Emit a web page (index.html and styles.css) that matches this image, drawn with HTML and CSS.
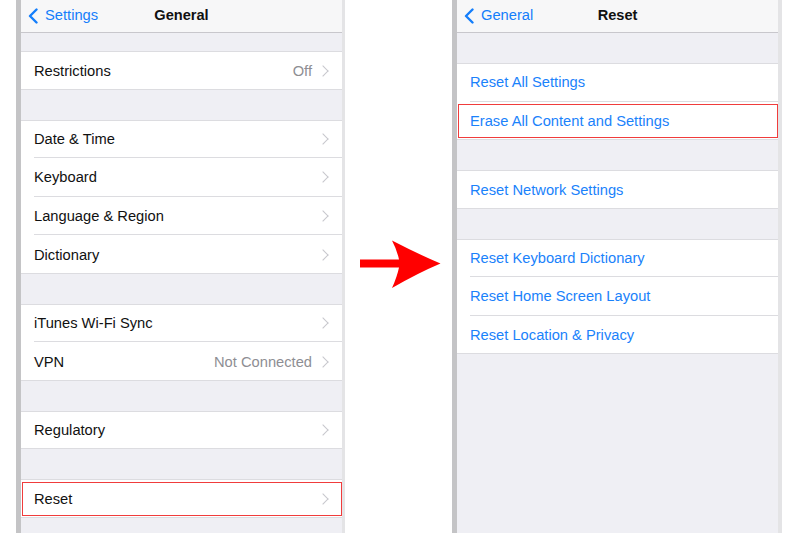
FILE: index.html
```html
<!DOCTYPE html>
<html>
<head>
<meta charset="utf-8">
<link rel="stylesheet" href="styles.css">
</head>
<body>
<div class="page">
  <div class="lead"></div>
  <div class="phone">
    <div class="screen">
      <div class="nav">
        <div class="back">
          <svg class="back-icon" width="12" height="16" viewBox="0 0 12 16"><path d="M9.5 1.5 L3 8 L9.5 14.5" fill="none" stroke="#147efb" stroke-width="2.4" stroke-linecap="round" stroke-linejoin="round"/></svg>
          <span>Settings</span>
        </div>
        <div class="title">General</div>
      </div>
      <div class="group first">
        <div class="row"><div class="inner"><span class="label">Restrictions</span><span class="value">Off</span><span class="chev"></span></div></div>
      </div>
      <div class="group">
        <div class="row"><div class="inner"><span class="label">Date &amp; Time</span><span class="chev"></span></div></div>
        <div class="row"><div class="inner"><span class="label">Keyboard</span><span class="chev"></span></div></div>
        <div class="row"><div class="inner"><span class="label">Language &amp; Region</span><span class="chev"></span></div></div>
        <div class="row"><div class="inner"><span class="label">Dictionary</span><span class="chev"></span></div></div>
      </div>
      <div class="group">
        <div class="row"><div class="inner"><span class="label">iTunes Wi-Fi Sync</span><span class="chev"></span></div></div>
        <div class="row"><div class="inner"><span class="label">VPN</span><span class="value">Not Connected</span><span class="chev"></span></div></div>
      </div>
      <div class="group">
        <div class="row"><div class="inner"><span class="label">Regulatory</span><span class="chev"></span></div></div>
      </div>
      <div class="group">
        <div class="row hl"><div class="inner"><span class="label">Reset</span><span class="chev"></span></div><div class="mark"></div></div>
      </div>
    </div>
  </div>
  <div class="middle">
    <svg class="arrow" width="107" height="533" viewBox="345 0 107 533">
      <path d="M360 259.5 L399 259.5 Q397 250 392 240.5 Q418 254 440.5 263.5 Q418 273 392 288 Q397 277 399 267.5 L360 267.5 Z" fill="#ff0000"/>
    </svg>
  </div>
  <div class="phone right">
    <div class="screen">
      <div class="nav">
        <div class="back">
          <svg class="back-icon" width="12" height="16" viewBox="0 0 12 16"><path d="M9.5 1.5 L3 8 L9.5 14.5" fill="none" stroke="#147efb" stroke-width="2.4" stroke-linecap="round" stroke-linejoin="round"/></svg>
          <span>General</span>
        </div>
        <div class="title">Reset</div>
      </div>
      <div class="group">
        <div class="row"><div class="inner"><span class="label blue">Reset All Settings</span></div></div>
        <div class="row hl"><div class="inner"><span class="label blue">Erase All Content and Settings</span></div><div class="mark"></div></div>
      </div>
      <div class="group">
        <div class="row"><div class="inner"><span class="label blue">Reset Network Settings</span></div></div>
      </div>
      <div class="group">
        <div class="row"><div class="inner"><span class="label blue">Reset Keyboard Dictionary</span></div></div>
        <div class="row"><div class="inner"><span class="label blue">Reset Home Screen Layout</span></div></div>
        <div class="row"><div class="inner"><span class="label blue">Reset Location &amp; Privacy</span></div></div>
      </div>
    </div>
  </div>
</div>
</body>
</html>
```
FILE: styles.css
```css
* { box-sizing: border-box; }
html, body { margin: 0; padding: 0; background: #ffffff; }
body {
  width: 800px;
  height: 533px;
  overflow: hidden;
  font-family: "Liberation Sans", Arial, sans-serif;
}
.page {
  display: flex;
  height: 533px;
}
.lead { width: 16px; flex: none; }
.phone {
  width: 329px;
  flex: none;
  height: 533px;
  display: flex;
  border-left: 5px solid #c4c4c6;
  border-right: 3px solid #e4e4e6;
  background: #efeff4;
  box-shadow: inset 1px 0 0 #d6d6d8;
}
.phone.right {
  width: 330px;
  border-right-width: 4px;
}
.screen {
  flex: 1;
  display: flex;
  flex-direction: column;
  background: #efeff4;
  position: relative;
}
.nav {
  height: 33px;
  flex: none;
  background: #f7f7f8;
  border-bottom: 1px solid #c8c7cc;
  display: flex;
  align-items: center;
  justify-content: center;
  position: relative;
}
.back {
  position: absolute;
  left: 6px;
  top: 0;
  height: 32px;
  display: flex;
  align-items: center;
  gap: 6px;
  color: #147efb;
  font-size: 14.7px;
}
.back-icon { display: block; margin-top: -1px; }
.title {
  font-size: 14.6px;
  font-weight: bold;
  color: #111111;
  margin-top: -3px;
}
.back span { margin-top: -3px; }
.group {
  margin-top: 30px;
  background: #ffffff;
  box-shadow: inset 0 1px 0 #dcdce0, inset 0 -1px 0 #dcdce0;
}
.group.first { margin-top: 18px; }
.row {
  height: 38.5px;
  padding-left: 13px;
  position: relative;
}
.inner {
  height: 100%;
  display: flex;
  align-items: center;
  padding-right: 13px;
  padding-top: 1px;
  border-bottom: 1px solid #dcdce0;
}
.row:last-child .inner { border-bottom: none; }
.label {
  flex: 1;
  font-size: 14.7px;
  color: #111111;
}
.label.blue { color: #1a82fb; }
.value {
  font-size: 14.7px;
  color: #8e8e93;
  margin-right: 7px;
}
.chev {
  width: 8px;
  height: 8px;
  border-top: 1.5px solid #c7c7cc;
  border-right: 1.5px solid #c7c7cc;
  transform: rotate(45deg);
  margin-right: 2px;
}
.mark {
  position: absolute;
  left: 1px;
  right: 0;
  top: 2.5px;
  bottom: 2px;
  border: 1.5px solid #f03c3c;
}
.middle {
  width: 107px;
  flex: none;
  height: 533px;
}
.arrow { display: block; }
```
